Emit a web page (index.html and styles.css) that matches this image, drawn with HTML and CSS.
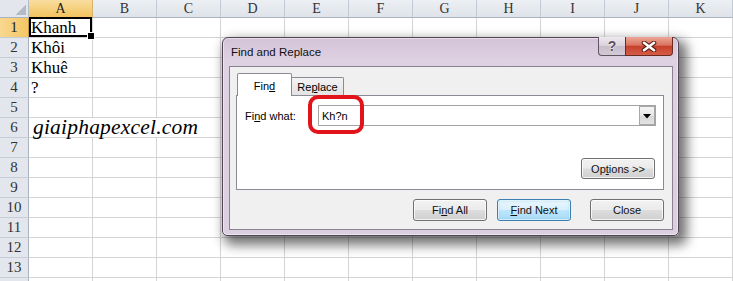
FILE: index.html
```html
<!DOCTYPE html>
<html lang="vi">
<head>
<meta charset="utf-8">
<title>Find and Replace</title>
<link rel="stylesheet" href="styles.css">
</head>
<body>
<div class="sheet">
  <div class="corner"><div class="tri"></div></div>
  <div class="ch on">A</div><div class="ch">B</div><div class="ch">C</div><div class="ch">D</div><div class="ch">E</div><div class="ch">F</div><div class="ch">G</div><div class="ch">H</div><div class="ch">I</div><div class="ch">J</div><div class="ch">K</div>

  <div class="rh on">1</div><div class="c sel">Khanh</div><div class="c"></div><div class="c"></div><div class="c"></div><div class="c"></div><div class="c"></div><div class="c"></div><div class="c"></div><div class="c"></div><div class="c"></div><div class="c"></div>
  <div class="rh">2</div><div class="c">Khôi</div><div class="c"></div><div class="c"></div><div class="c"></div><div class="c"></div><div class="c"></div><div class="c"></div><div class="c"></div><div class="c"></div><div class="c"></div><div class="c"></div>
  <div class="rh">3</div><div class="c">Khuê</div><div class="c"></div><div class="c"></div><div class="c"></div><div class="c"></div><div class="c"></div><div class="c"></div><div class="c"></div><div class="c"></div><div class="c"></div><div class="c"></div>
  <div class="rh">4</div><div class="c">?</div><div class="c"></div><div class="c"></div><div class="c"></div><div class="c"></div><div class="c"></div><div class="c"></div><div class="c"></div><div class="c"></div><div class="c"></div><div class="c"></div>
  <div class="rh">5</div><div class="c"></div><div class="c"></div><div class="c"></div><div class="c"></div><div class="c"></div><div class="c"></div><div class="c"></div><div class="c"></div><div class="c"></div><div class="c"></div><div class="c"></div>
  <div class="rh">6</div><div class="c span3 brand">giaiphapexcel.com</div><div class="c"></div><div class="c"></div><div class="c"></div><div class="c"></div><div class="c"></div><div class="c"></div><div class="c"></div><div class="c"></div>
  <div class="rh">7</div><div class="c"></div><div class="c"></div><div class="c"></div><div class="c"></div><div class="c"></div><div class="c"></div><div class="c"></div><div class="c"></div><div class="c"></div><div class="c"></div><div class="c"></div>
  <div class="rh">8</div><div class="c"></div><div class="c"></div><div class="c"></div><div class="c"></div><div class="c"></div><div class="c"></div><div class="c"></div><div class="c"></div><div class="c"></div><div class="c"></div><div class="c"></div>
  <div class="rh">9</div><div class="c"></div><div class="c"></div><div class="c"></div><div class="c"></div><div class="c"></div><div class="c"></div><div class="c"></div><div class="c"></div><div class="c"></div><div class="c"></div><div class="c"></div>
  <div class="rh">10</div><div class="c"></div><div class="c"></div><div class="c"></div><div class="c"></div><div class="c"></div><div class="c"></div><div class="c"></div><div class="c"></div><div class="c"></div><div class="c"></div><div class="c"></div>
  <div class="rh">11</div><div class="c"></div><div class="c"></div><div class="c"></div><div class="c"></div><div class="c"></div><div class="c"></div><div class="c"></div><div class="c"></div><div class="c"></div><div class="c"></div><div class="c"></div>
  <div class="rh">12</div><div class="c"></div><div class="c"></div><div class="c"></div><div class="c"></div><div class="c"></div><div class="c"></div><div class="c"></div><div class="c"></div><div class="c"></div><div class="c"></div><div class="c"></div>
  <div class="rh">13</div><div class="c"></div><div class="c"></div><div class="c"></div><div class="c"></div><div class="c"></div><div class="c"></div><div class="c"></div><div class="c"></div><div class="c"></div><div class="c"></div><div class="c"></div>
  <div class="rh"></div><div class="c"></div><div class="c"></div><div class="c"></div><div class="c"></div><div class="c"></div><div class="c"></div><div class="c"></div><div class="c"></div><div class="c"></div><div class="c"></div><div class="c"></div>
</div>

<div class="dlg">
  <div class="tbar">
    <span class="ttl">Find and Replace</span>
    <div class="caps">
      <div class="cap help">?</div>
      <div class="cap close">
        <svg width="16" height="11" viewBox="0 0 16 11">
          <path d="M3 1.8 L13 9.2 M13 1.8 L3 9.2" stroke="#5b1b12" stroke-width="4.6" stroke-linecap="round" fill="none"/>
          <path d="M3 1.8 L13 9.2 M13 1.8 L3 9.2" stroke="#ffffff" stroke-width="2.6" stroke-linecap="round" fill="none"/>
        </svg>
      </div>
    </div>
  </div>
  <div class="client">
    <div class="tabs">
      <div class="tab act">Fin<u>d</u></div>
      <div class="tab">Re<u>p</u>lace</div>
    </div>
    <div class="panel">
      <div class="frow">
        <span class="lbl">Fi<u>n</u>d what:</span>
        <div class="inp">
          <span class="val">Kh?n</span>
          <div class="dd">
            <svg width="8" height="5" viewBox="0 0 8 5"><path d="M0 0 H8 L4 4.5 Z" fill="#000"/></svg>
          </div>
        </div>
      </div>
      <div class="orow"><div class="btn opt">Op<u>t</u>ions &gt;&gt;</div></div>
    </div>
    <div class="brow">
      <div class="btn">Fi<u>n</u>d All</div>
      <div class="btn def"><u>F</u>ind Next</div>
      <div class="btn cls">Close</div>
    </div>
  </div>
  <div class="mark"></div>
</div>
</body>
</html>
```

FILE: styles.css
```css
* { box-sizing: border-box; margin: 0; padding: 0; }
html, body { width: 733px; height: 281px; overflow: hidden; background: #fff; }
body { position: relative; font-family: "Liberation Serif", "Times New Roman", serif; }

.sheet {
  display: grid;
  grid-template-columns: 29px repeat(11, 64px);
  grid-template-rows: 18px;
  grid-auto-rows: 20px;
  width: 733px;
}
.corner {
  background: #e3e7ed;
  border-right: 1px solid #b4bcc7;
  border-bottom: 1px solid #a9b2be;
  display: flex;
  justify-content: flex-end;
  align-items: flex-end;
  padding: 0 2px 2px 0;
}
.tri { width: 10px; height: 10px; background: linear-gradient(135deg, transparent 50%, #b3bbc5 50%); }
.ch {
  background: linear-gradient(#eceff3, #dfe4ea);
  border-right: 1px solid #c3cad3;
  border-bottom: 1px solid #a9b2be;
  font-family: "Liberation Serif", serif;
  font-size: 14px;
  line-height: 17px;
  text-align: center;
  color: #333;
}
.ch.on { background: linear-gradient(#f9dd9f, #f2c35f); border-bottom-color: #c39a48; border-right-color: #d8b46a; color: #222; }
.rh {
  background: #e3e7ed;
  border-right: 1px solid #a9b2be;
  border-bottom: 1px solid #c6cdd6;
  font-family: "Liberation Serif", serif;
  font-size: 15px;
  line-height: 19px;
  text-align: center;
  color: #333;
}
.rh.on { background: linear-gradient(90deg, #f8d78f, #f3c765); border-right-color: #c39a48; color: #222; }
.c {
  border-right: 1px solid #d4d4d4;
  border-bottom: 1px solid #d4d4d4;
  font-size: 17px;
  line-height: 19px;
  padding-left: 2px;
  white-space: nowrap;
  color: #000;
}
.span3 { grid-column: span 3; }
.brand { font-style: italic; font-size: 21.5px; padding-left: 4px; letter-spacing: 0.2px; }
.sel { position: relative; }
.sel::after {
  content: "";
  position: absolute;
  left: 0; top: -1px; right: 0; bottom: 0;
  border: 2px solid #000;
  z-index: 2;
}
.sel::before {
  content: "";
  position: absolute;
  right: -3px; bottom: -3px;
  width: 6px; height: 6px;
  background: #000;
  border: 1px solid #fff;
  z-index: 3;
}

/* dialog */
.dlg {
  position: absolute;
  left: 222px; top: 37px;
  width: 457px; height: 199px;
  border: 1px solid #4f4553;
  border-radius: 6px 6px 5px 5px;
  background: linear-gradient(#d4c3d8, #ded1e1 22px, #dccfe0);
  box-shadow: 5px 6px 12px 3px rgba(0, 0, 0, 0.55), inset 0 0 0 1px rgba(255, 255, 255, 0.45);
  display: flex;
  flex-direction: column;
  font-family: "Liberation Sans", Arial, sans-serif;
  font-size: 11px;
  color: #000;
}
.tbar { height: 28px; display: flex; align-items: flex-start; padding: 0 5px 0 8px; }
.ttl { font-size: 11.5px; line-height: 28px; color: #111; }
.caps { margin-left: auto; margin-top: -1px; display: flex; }
.cap { height: 19px; border: 1px solid #5f5463; border-top: none; display: flex; align-items: center; justify-content: center; }
.help {
  width: 27px;
  border-right: none;
  border-radius: 0 0 0 4px;
  background: linear-gradient(#eee8ef, #d9d0da 50%, #c7bcc9 51%, #d4cad6);
  font-weight: bold;
  font-size: 14px;
  color: #5a4f5d;
  text-shadow: 0 0 2px #fff, 0 0 1px #fff;
}
.close {
  width: 48px;
  border-radius: 0 0 4px 0;
  border-color: #6a2a22;
  background: linear-gradient(#eba697, #dc7461 45%, #c6412d 52%, #d65c46);
}

.client {
  flex: 1;
  margin: 0 5px 5px 6px;
  background: #f0f0f0;
  border: 1px solid #8c8191;
  padding: 6px 8px 0 6px;
  display: flex;
  flex-direction: column;
}
.tabs { display: flex; height: 23px; margin-bottom: -1px; position: relative; z-index: 1; }
.tab {
  width: 52px; height: 18px;
  margin-top: 4px;
  border: 1px solid #898c95;
  border-left: none;
  border-bottom: none;
  border-radius: 0 2px 0 0;
  background: linear-gradient(#f3f3f3, #e3e3e3);
  text-align: center;
  padding-top: 2px;
  line-height: 15px;
}
.tab.act {
  width: 55px; height: 23px;
  margin: 0 0 0 1px;
  border-left: 1px solid #898c95;
  border-radius: 2px 2px 0 0;
  background: #fff;
  padding-top: 5px;
}
.panel {
  height: 95px;
  background: #fff;
  border: 1px solid #898c95;
  display: flex;
  flex-direction: column;
  justify-content: space-between;
  padding: 9px 7px 10px 8px;
}
.frow { display: flex; align-items: center; }
.lbl { width: 73px; }
.inp {
  flex: 1;
  height: 21px;
  border: 1px solid #a3a3a3;
  display: flex;
  align-items: center;
  padding-left: 3px;
  background: #fff;
}
.val { font-size: 11px; }
.dd {
  margin-left: auto;
  width: 16px; height: 19px;
  border: 1px solid #a8a8a8;
  background: linear-gradient(#f5f5f5, #e6e6e6 50%, #d8d8d8 51%, #e2e2e2);
  display: flex;
  align-items: center;
  justify-content: center;
  padding-top: 1px;
}
.orow { display: flex; justify-content: flex-end; padding-right: 1px; }
.btn {
  width: 74px; height: 22px;
  border: 1px solid #707070;
  border-radius: 3px;
  background: linear-gradient(#f2f2f2, #ebebeb 48%, #dddddd 52%, #cfcfcf);
  box-shadow: inset 0 0 0 1px rgba(255, 255, 255, 0.75);
  display: flex;
  align-items: center;
  justify-content: center;
  color: #111;
}
.btn.opt { height: 21px; }
.btn.def {
  border-color: #3c7fb1;
  background: linear-gradient(#eaf6fd, #d9f0fc 48%, #bee6fd 52%, #a7d9f5);
  box-shadow: inset 0 0 0 1px rgba(255, 255, 255, 0.6), inset 0 0 2px 1px rgba(120, 200, 240, 0.6);
}
.brow { display: flex; justify-content: flex-end; gap: 10px; margin-top: 9px; }
.btn.cls { margin-left: 9px; }
.mark {
  position: absolute;
  left: 85px; top: 57px;
  width: 56px; height: 39px;
  border: 4px solid #e2141b;
  border-radius: 10px;
}
```
